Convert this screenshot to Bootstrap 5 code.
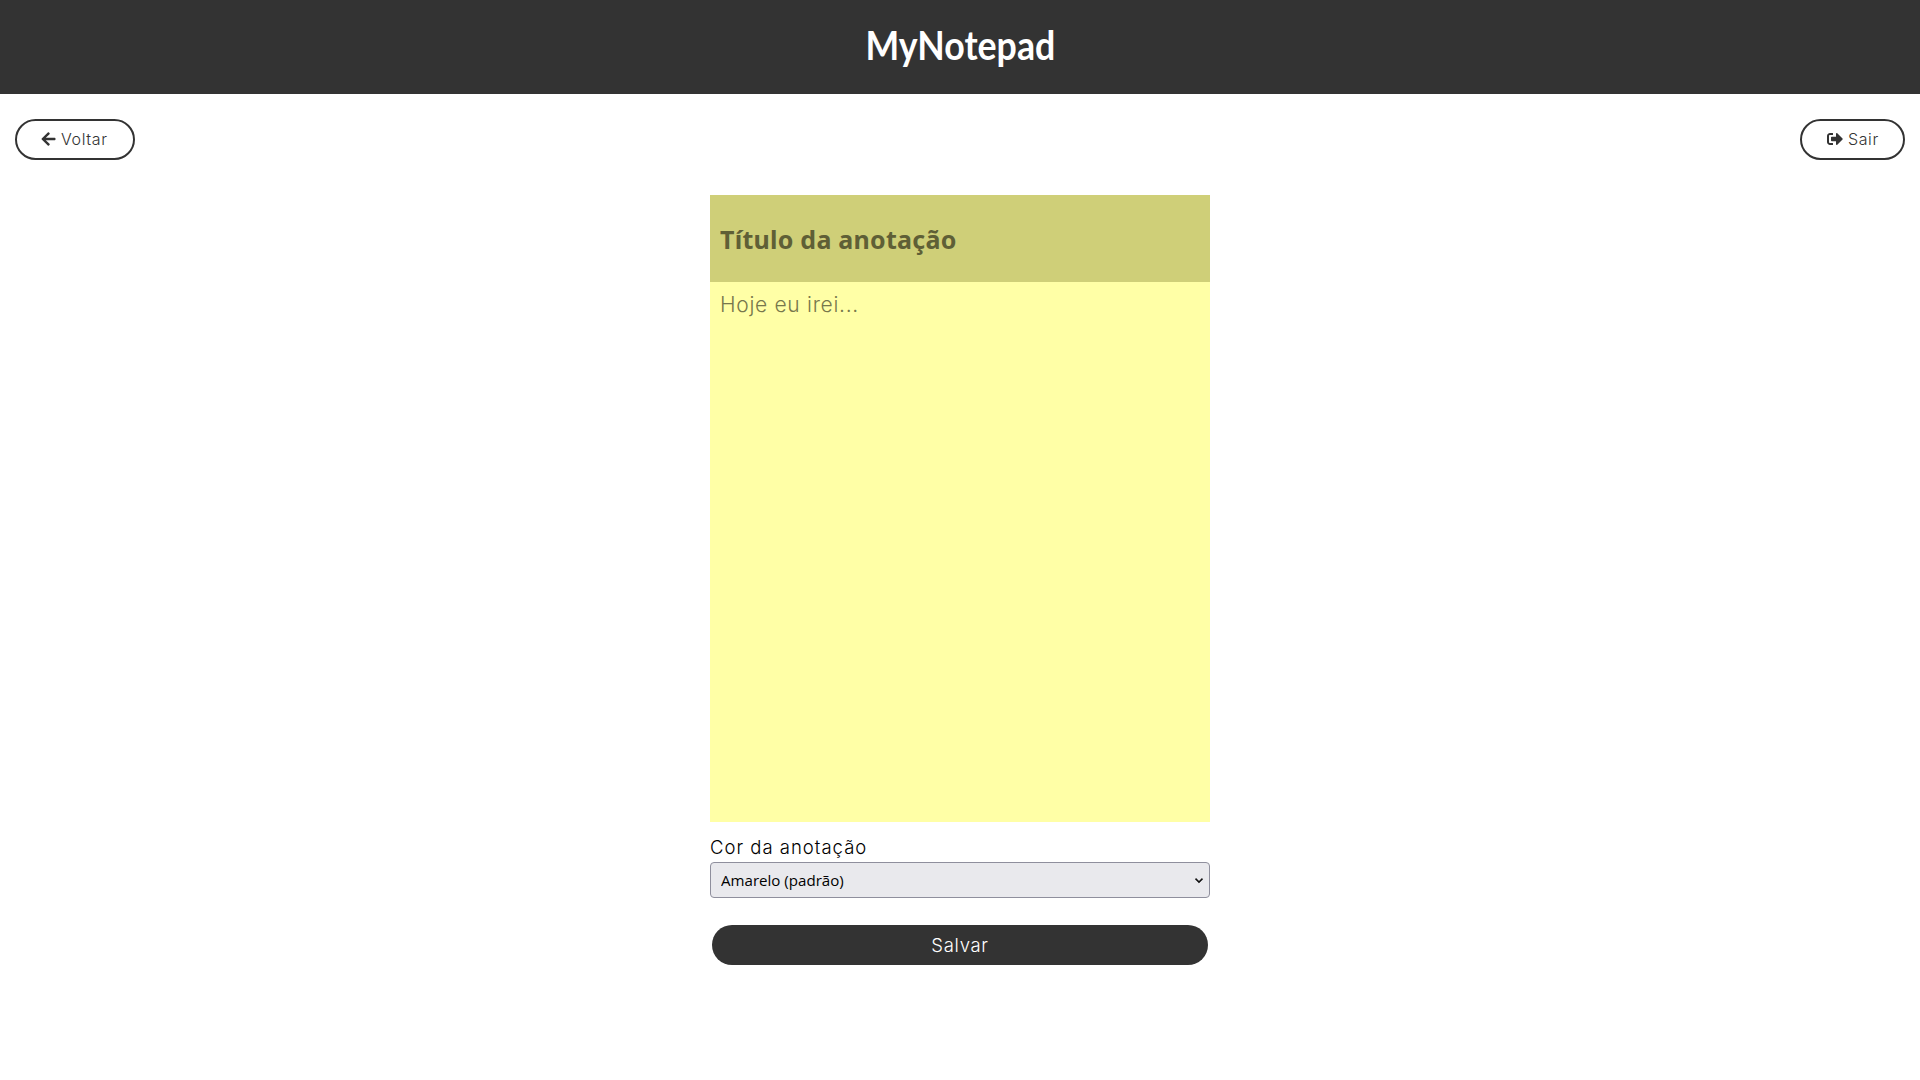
<!DOCTYPE html>
<html lang="pt-BR">
<head>
<meta charset="utf-8">
<meta name="viewport" content="width=device-width, initial-scale=1">
<title>MyNotepad</title>
<link href="https://cdn.jsdelivr.net/npm/bootstrap@5.3.0/dist/css/bootstrap.min.css" rel="stylesheet">
<style>
body{font-family:Inter,"Open Sans",sans-serif;font-weight:300;color:#000}
.topbar{height:94px;background:#333}
.logo{font:700 40px/50px Lato,sans-serif;color:#fff;transform:scaleX(.893);margin-top:-4px}
.toolbar{padding:25px 15px 0}
.btn-pill{height:41px;border:2px solid #333;border-radius:21px;padding:0 0 1px 25px;font-weight:300;font-size:16px;line-height:1;letter-spacing:.6px;color:#333;background:#fff}
.btn-pill svg{fill:#333}
.btn-pill span{margin-left:5px}
.btn-back{width:120px}
.btn-back svg{margin-left:-1px}
.btn-exit{width:105px}
.note-form{width:500px;margin-top:35px}
.note-title,.note-text{border:0;border-radius:0;outline:0;padding:0 10px;resize:none;display:block}
.note-title{height:87px;background:#cfcf78;font:700 25px "Noto Sans",sans-serif;letter-spacing:.25px}
.note-title::placeholder{color:#5f5f36;opacity:1}
.note-text{height:540px;background:#ffffa6;font-weight:300;font-size:21px;line-height:28px;letter-spacing:.7px;padding-top:9px}
.note-text::placeholder{color:#77774c;opacity:1}
.color-label{font-size:18.500px;line-height:26px;letter-spacing:1px;margin-top:12px;margin-bottom:2px}
.color-select{height:36px;border:1px solid #8f8f9d;border-radius:4px;padding:0 30px 0 10px;font-family:"Open Sans",sans-serif;font-size:15.100px;font-weight:400;color:#000;background-color:#e9e9ed;background-position:right 5px center;background-size:10px 10px;background-image:url("data:image/svg+xml,%3Csvg xmlns='http://www.w3.org/2000/svg' viewBox='0 0 10 10'%3E%3Cpath d='M1.5 3.6 5 7.1 8.500 3.600' fill='none' stroke='%23111' stroke-width='1.5'/%3E%3C/svg%3E")}
.btn-save{height:40px;margin:27px 2px 0;border:0;border-radius:20px;background:#333;color:#fff;font-size:18.500px;font-weight:300;line-height:1;letter-spacing:.7px}
</style>
</head>
<body>
<header class="topbar d-flex justify-content-center align-items-center">
  <div class="logo">MyNotepad</div>
</header>
<nav class="toolbar d-flex justify-content-between">
  <button class="btn btn-pill btn-back d-flex align-items-center" type="button">
    <svg width="15" height="16" viewBox="0 0 448 512"><path d="M257.500 445.100l-22.200 22.200c-9.400 9.400-24.600 9.400-33.900 0L7 273c-9.400-9.400-9.400-24.600 0-33.900L201.400 44.700c9.400-9.400 24.600-9.400 33.900 0l22.200 22.200c9.500 9.500 9.300 25-.4 34.300L136.600 216H424c13.300 0 24 10.700 24 24v32c0 13.300-10.700 24-24 24H136.600l120.500 114.800c9.800 9.300 10 24.800.4 34.300z"/></svg>
    <span>Voltar</span>
  </button>
  <button class="btn btn-pill btn-exit d-flex align-items-center" type="button">
    <svg width="16" height="16" viewBox="0 0 512 512"><path d="M497 273L329 441c-15 15-41 4.500-41-17v-96H152c-13.300 0-24-10.700-24-24v-96c0-13.300 10.700-24 24-24h136V88c0-21.400 25.900-32 41-17l168 168c9.300 9.400 9.300 24.600 0 34zM192 436v-40c0-6.600-5.400-12-12-12H96c-17.700 0-32-14.300-32-32V160c0-17.700 14.300-32 32-32h84c6.600 0 12-5.400 12-12V76c0-6.600-5.400-12-12-12H96c-53 0-96 43-96 96v192c0 53 43 96 96 96h84c6.600 0 12-5.400 12-12z"/></svg>
    <span>Sair</span>
  </button>
</nav>
<main>
  <form class="note-form mx-auto d-flex flex-column">
    <input class="note-title w-100" type="text" placeholder="Título da anotação">
    <textarea class="note-text w-100" placeholder="Hoje eu irei..."></textarea>
    <label class="color-label" for="noteColor">Cor da anotação</label>
    <select class="form-select color-select" id="noteColor"><option>Amarelo (padrão)</option></select>
    <button class="btn btn-save" type="button">Salvar</button>
  </form>
</main>
<script src="https://cdn.jsdelivr.net/npm/bootstrap@5.3.0/dist/js/bootstrap.bundle.min.js"></script>
</body>
</html>
